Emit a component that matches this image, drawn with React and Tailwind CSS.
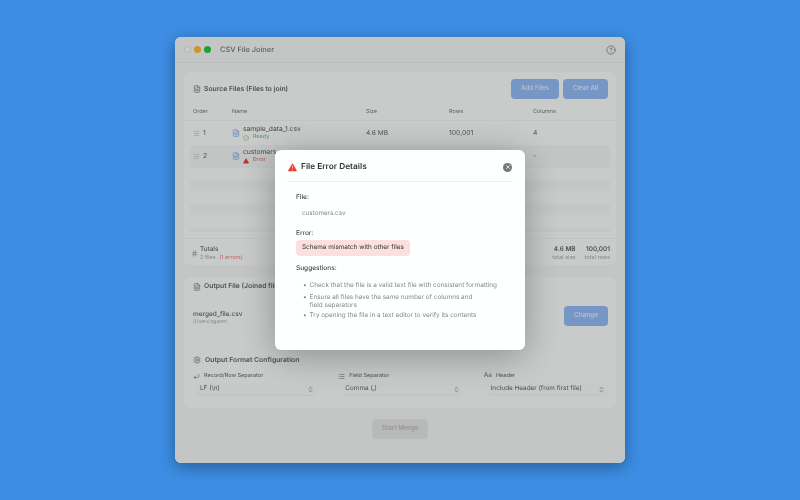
import { FileText, TriangleAlert, CircleCheck, CircleHelp, CornerDownLeft, List, Settings, ChevronsUpDown, X, Hash, Menu } from 'lucide-react';

const files = [
    { order: 1, name: 'sample_data_1.csv', size: '4.6 MB', rows: '100,001', cols: '4', ok: true },
    { order: 2, name: 'customers.csv', size: '', rows: '', cols: '-', ok: false },
];

function Row({ file }) {
    return (
        <div className={`grid grid-cols-[39px_134px_83px_84px_1fr] items-center h-[23px] mx-[6px] pl-[3px] rounded ${file.ok ? '' : 'bg-[#f6f6f6]'}`}>
            <div className="flex items-center gap-[3px] text-[6.8px] text-[#666]">
                <Menu size={7} className="text-[#bbb]" />
                <span>{file.order}</span>
            </div>
            <div className="flex items-center gap-[3px]">
                <FileText size={8} className="text-[#7ca8e6]" />
                <div className="leading-none">
                    <div className="text-[6.7px] text-[#555] mb-[2px]">{file.name}</div>
                    {file.ok ? (
                        <div className="flex items-center gap-1 text-[5.5px] text-[#6cc070]">
                            <CircleCheck size={6} /> Ready
                        </div>
                    ) : (
                        <div className="flex items-center gap-1 text-[5.5px] text-[#e5645c]">
                            <TriangleAlert size={6} fill="#e0483e" stroke="#e0483e" /> Error
                        </div>
                    )}
                </div>
            </div>
            <div className="text-[6.6px] text-[#666]">{file.size}</div>
            <div className="text-[6.8px] text-[#666]">{file.rows}</div>
            <div className="text-[6.8px] text-[#666]">{file.cols}</div>
        </div>
    );
}

function SelectBox({ icon, label, value }) {
    return (
        <div className="min-w-0">
            <div className="flex items-center gap-[4px] text-[5.5px] font-medium text-[#777] h-[10px]">
                {icon}
                <span>{label}</span>
            </div>
            <div className="mt-[2px] ml-[4px] h-[12px] flex items-center justify-between px-[3px] rounded-sm bg-[#fbfbfb] text-[6.4px] text-[#666] shadow-[0_0.5px_0.5px_rgba(0,0,0,0.08)]">
                <span>{value}</span>
                <ChevronsUpDown size={7} className="text-[#666]" />
            </div>
        </div>
    );
}

export default function App() {
    return (
        <div className="w-[800px] h-[500px] bg-[#3c8de3] flex items-center justify-center font-['Inter','Liberation_Sans',sans-serif] [text-rendering:geometricPrecision]">
            <div className="relative w-[450px] h-[426px] rounded-md overflow-hidden bg-[#f7f7f7] shadow-[0_4px_16px_rgba(0,0,0,0.35)] flex flex-col opacity-[0.999]">
                {/* title bar */}
                <div className="h-[26px] shrink-0 flex items-center pl-[9px] pr-[9px] border-b border-[#ededed]">
                    <div className="flex items-center gap-[3px]">
                        <span className="w-[7px] h-[7px] rounded-full bg-white border-[0.5px] border-[#e4e4e4]" />
                        <span className="w-[7px] h-[7px] rounded-full bg-[#febc2e]" />
                        <span className="w-[7px] h-[7px] rounded-full bg-[#28c840]" />
                    </div>
                    <span className="ml-[9px] text-[7.4px] font-medium text-[#777]">CSV File Joiner</span>
                    <CircleHelp size={10} className="ml-auto text-[#888]" />
                </div>

                <div className="flex-1 px-[9px] pt-[9px] flex flex-col">
                    {/* source files */}
                    <div className="h-[193px] shrink-0 rounded-md bg-[#fdfdfd] flex flex-col overflow-hidden">
                        <div className="h-[32px] shrink-0 flex items-center pl-[9px] pr-[8px] pt-[2px]">
                            <FileText size={8} className="text-[#777]" />
                            <span className="ml-[3px] text-[6.8px] font-semibold text-[#666]">Source Files (Files to join)</span>
                            <div className="ml-auto flex gap-1">
                                <button className="w-[48px] h-[20px] rounded bg-[#95bcf8] text-white/80 text-[6.3px] font-medium">Add Files</button>
                                <button className="w-[45px] h-[20px] rounded bg-[#95bcf8] text-white/80 text-[6.3px] font-medium">Clear All</button>
                            </div>
                        </div>
                        <div className="grid grid-cols-[39px_134px_83px_84px_1fr] items-center h-[17px] px-[9px] text-[5.5px] text-[#777] border-b border-[#f4f4f4]">
                            <span>Order</span>
                            <span>Name</span>
                            <span>Size</span>
                            <span>Rows</span>
                            <span>Columns</span>
                        </div>
                        <div className="pt-[1px] flex flex-col">
                            <Row file={files[0]} />
                            <Row file={files[1]} />
                        </div>
                        <div className="flex-1 flex flex-col justify-start gap-[13px] pt-[12px] px-[6px]">
                            <div className="h-[11px] bg-[#f8f8f8]" />
                            <div className="h-[11px] bg-[#f8f8f8]" />
                            <div className="h-[4px] bg-[#f8f8f8]" />
                        </div>
                        <div className="h-[27px] shrink-0 flex items-center pl-[7px] pr-[6px] pt-[3px] border-t border-[#f4f4f4]">
                            <Hash size={7} className="text-[#999]" />
                            <div className="ml-[2px] leading-none">
                                <div className="text-[6.4px] font-medium text-[#666]">Totals</div>
                                <div className="mt-[4px] text-[5.5px] text-[#aaa]">
                                    2 files <span className="ml-[2px] text-[#e6807a]">(1 errors)</span>
                                </div>
                            </div>
                            <div className="ml-auto flex gap-[9px] text-right leading-none">
                                <div>
                                    <div className="text-[6.4px] font-semibold text-[#666]">4.6 MB</div>
                                    <div className="mt-[4px] text-[5.5px] text-[#aaa]">total size</div>
                                </div>
                                <div>
                                    <div className="text-[6.4px] font-semibold text-[#666]">100,001</div>
                                    <div className="mt-[4px] text-[5.5px] text-[#aaa]">total rows</div>
                                </div>
                            </div>
                        </div>
                    </div>

                    {/* output */}
                    <div className="mt-[12px] h-[131px] shrink-0 rounded-md bg-[#fdfdfd] flex flex-col pl-[9px] pr-[8px]">
                        <div className="flex items-center h-[19px]">
                            <FileText size={8} className="text-[#777]" />
                            <span className="ml-[3px] text-[6.8px] font-semibold text-[#666]">Output File (Joined file)</span>
                        </div>
                        <div className="flex items-center justify-between h-[20px] mt-[10px]">
                            <div className="leading-none pt-[4px]">
                                <div className="text-[6.5px] font-medium text-[#666]">merged_file.csv</div>
                                <div className="mt-[3px] text-[5px] text-[#aaa]">/Users/ngaren</div>
                            </div>
                            <button className="w-[44px] h-[20px] rounded bg-[#95bcf8] text-white/80 text-[6.5px] font-medium">Change</button>
                        </div>
                        <div className="flex items-center h-[12px] mt-[28px]">
                            <Settings size={8} className="text-[#777]" />
                            <span className="ml-[4px] text-[6.8px] font-semibold text-[#666]">Output Format Configuration</span>
                        </div>
                        <div className="grid grid-cols-3 gap-x-[21px] mt-[5px]">
                            <SelectBox icon={<CornerDownLeft size={7} />} label="Record/Row Separator" value="LF (\n)" />
                            <SelectBox icon={<List size={7} />} label="Field Separator" value="Comma (,)" />
                            <SelectBox icon={<span className="text-[6.5px] text-[#888]">Aa</span>} label="Header" value="Include Header (from first file)" />
                        </div>
                    </div>

                    <button className="mt-[11px] self-center w-[56px] h-[20px] rounded bg-[#e8e8e8] text-[6.5px] font-medium text-[#bbb]">Start Merge</button>
                </div>

                {/* overlay + modal */}
                <div className="absolute inset-0 bg-black/20 backdrop-blur-[0.3px] flex items-center justify-center">
                    <div className="w-[250px] h-[200px] bg-white rounded-md shadow-[0_6px_36px_rgba(0,0,0,0.3)] px-[12px] pt-[10px]">
                        <div className="flex items-center h-[14px]">
                            <TriangleAlert size={11} fill="#ef3b33" stroke="white" strokeWidth={1.5} />
                            <span className="ml-[3px] text-[8.3px] font-semibold text-[#333]">File Error Details</span>
                            <span className="ml-auto mr-[1px] w-[9px] h-[9px] rounded-full bg-[#777] flex items-center justify-center">
                                <X size={6} strokeWidth={3} className="text-white" />
                            </span>
                        </div>
                        <div className="mt-[7px] border-t border-[#eeeeee]" />
                        <div className="px-[9px]">
                            <div className="mt-[10px] text-[6.5px] leading-[10px] font-medium text-[#444]">File:</div>
                            <div className="mt-[6px] pl-[6px] text-[6.3px] leading-[10px] text-[#888]">customers.csv</div>
                            <div className="mt-[10px] text-[6.5px] leading-[10px] font-medium text-[#444]">Error:</div>
                            <div className="mt-[2px] w-[114px] h-[16px] flex items-center pl-[6px] rounded bg-[#fde0e0] text-[6.4px] text-[#333]">Schema mismatch with other files</div>
                            <div className="mt-[7px] text-[6.5px] leading-[10px] font-medium text-[#444]">Suggestions:</div>
                            <ul className="mt-[8px] pl-[7px] text-[6.4px] leading-[8px] text-[#888] flex flex-col">
                                <li className="flex gap-[3px]"><span>•</span><span>Check that the file is a valid text file with consistent formatting</span></li>
                                <li className="mt-[4px] flex gap-[3px]"><span>•</span><span>Ensure all files have the same number of columns and<br />field separators</span></li>
                                <li className="mt-[2px] flex gap-[3px]"><span>•</span><span>Try opening the file in a text editor to verify its contents</span></li>
                            </ul>
                        </div>
                    </div>
                </div>
            </div>
        </div>
    );
}
